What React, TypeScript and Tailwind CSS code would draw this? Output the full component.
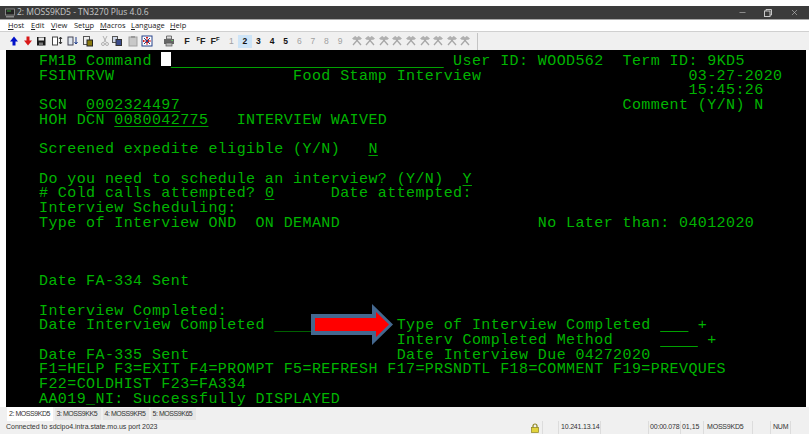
import type { ReactNode } from 'react';
import { Minus, X } from 'lucide-react';

function Row({ children }: { children?: ReactNode }) {
  return <div className="h-[14.7px]">{children}</div>;
}

// underlined 3270 input field
function Field({ children, dark }: { children: string; dark?: boolean }) {
  return (
    <span className={`underline underline-offset-[2px] ${dark ? 'decoration-[#006000]' : 'decoration-[#00a000]'}`}>
      {children}
    </span>
  );
}

function Hammers() {
  return (
    <svg width="12" height="12" viewBox="0 0 12 12" className="mx-auto">
      <path d="M3 2 L10 10 M9 2 L2 10" stroke="#a8a8a8" strokeWidth="1.3" />
      <path d="M1 3.5 L4.5 1 L6 2.5 L7.5 1 L11 3.5 L9 5 L6 4 L3 5 Z" fill="#b0b0b0" />
    </svg>
  );
}

function Sep() {
  return <div className="h-full w-px shrink-0 bg-[#dcdcdc]" />;
}

export default function App() {
  const nums = ['1', '2', '3', '4', '5', '6', '7', '8', '9'];

  return (
    <div className="relative h-[439px] w-[809px] overflow-hidden bg-white font-['Open_Sans',sans-serif]">
      <div className="h-[6px]" />

      {/* title bar */}
      <div className="flex h-[13px] items-center bg-[#3b3b3b] pl-[5px] pr-[10px] text-[8.5px] text-[#c8c8c8]">
        <svg width="10" height="10" viewBox="0 0 10 10">
          <rect x="0.5" y="1" width="9" height="6" fill="#222" stroke="#999" strokeWidth="0.8" />
          <rect x="2" y="2.5" width="4" height="1" fill="#3c9a3c" />
          <rect x="1" y="8" width="8" height="1.5" fill="#888" />
        </svg>
        <span className="ml-[2px] flex-1">2: MOSS9KD5 - TN3270 Plus 4.0.6</span>
        <Minus size={9} strokeWidth={1.5} className="mr-[17px]" />
        <svg width="8" height="8" viewBox="0 0 8 8" className="mr-[18px]" fill="none" stroke="#c8c8c8">
          <rect x="0.5" y="2" width="5.5" height="5.5" />
          <path d="M2 2V0.5H7.5V6H6" />
        </svg>
        <X size={9} strokeWidth={1.5} />
      </div>

      {/* menu */}
      <div className="flex h-[12px] items-center border-t border-[#a8a8a8] bg-white text-[7.5px] text-[#222]">
        <span className="ml-[8px] w-[23px]"><u>H</u>ost</span>
        <span className="w-[20px]"><u>E</u>dit</span>
        <span className="w-[23px]"><u>V</u>iew</span>
        <span className="w-[26px]">Set<u>u</u>p</span>
        <span className="w-[31px]"><u>M</u>acros</span>
        <span className="w-[39px]"><u>L</u>anguage</span>
        <span><u>H</u>elp</span>
      </div>

      {/* toolbar */}
      <div className="flex h-[19px] items-center border-t border-[#d0d0d0] bg-[#f0f0f0] pl-[7px]">
        <svg width="14" height="12" viewBox="0 0 14 12"><path d="M7 1.5 L11 6.5 H8.5 V10.5 H5.5 V6.5 H3 Z" fill="#0010c8" /></svg>
        <svg width="14" height="12" viewBox="0 0 14 12"><path d="M7 10.5 L11 5.5 H8.5 V1.5 H5.5 V5.5 H3 Z" fill="#d81818" /></svg>
        <svg width="12" height="12" viewBox="0 0 12 12">
          <rect x="2" y="2" width="8.5" height="8.5" fill="#1a1a1a" />
          <rect x="3.5" y="2.5" width="5.5" height="3" fill="#e8e8e8" />
          <rect x="4" y="7.5" width="4" height="3" fill="#777" />
        </svg>
        <svg width="12" height="12" viewBox="0 0 12 12" className="ml-[4px]">
          <rect x="1.5" y="2" width="5" height="8" fill="#fff" stroke="#444" />
          <path d="M9.5 2v7M8 4l1.5-2 1.5 2M8 7l1.5 2 1.5-2" stroke="#333" fill="none" />
        </svg>
        <svg width="12" height="12" viewBox="0 0 12 12" className="ml-[4px]">
          <rect x="1" y="2" width="5" height="8" fill="#dfe6ef" stroke="#445" />
          <path d="M9 2v7M7.5 7l1.5 2 1.5-2" stroke="#1a3a8a" fill="none" />
        </svg>
        <svg width="12" height="12" viewBox="0 0 12 12" className="ml-[3px]">
          <rect x="1.5" y="1.5" width="6" height="8" fill="#eee" stroke="#555" />
          <rect x="5" y="5" width="5.5" height="6" fill="#8a7a10" stroke="#222" />
        </svg>
        <svg width="12" height="12" viewBox="0 0 12 12" className="ml-[5px]" fill="none" stroke="#b0b0b0">
          <path d="M4 1l3 6M8 1L5 7" />
          <circle cx="4" cy="9" r="1.5" />
          <circle cx="8" cy="9" r="1.5" />
        </svg>
        <svg width="12" height="12" viewBox="0 0 12 12">
          <rect x="1.5" y="1.5" width="5" height="6" fill="#cfd6e6" stroke="#555" />
          <rect x="5" y="4.5" width="5.5" height="6" fill="#3a4a8a" stroke="#333" />
        </svg>
        <svg width="12" height="12" viewBox="0 0 12 12" className="ml-[4px]">
          <rect x="2" y="2" width="8" height="9" fill="#c8c8c8" stroke="#a0a0a0" />
          <rect x="4" y="1" width="4" height="2" fill="#999" />
        </svg>
        <svg width="12" height="12" viewBox="0 0 12 12" className="ml-[2px]">
          <rect x="1" y="1" width="10" height="10" fill="#fff" stroke="#24408a" />
          <path d="M6 2v8M2 6h8" stroke="#d02020" strokeWidth="2" strokeDasharray="1.5 1" />
          <path d="M3 3l6 6M9 3l-6 6" stroke="#24408a" strokeWidth="1" />
        </svg>
        <svg width="12" height="12" viewBox="0 0 12 12" className="ml-[10px]">
          <path d="M3.5 1h5v3h-5z" fill="#ddd" stroke="#555" strokeWidth="0.8" />
          <rect x="1" y="4" width="10" height="5" fill="#666" />
          <rect x="3" y="8" width="6" height="3" fill="#bbb" stroke="#555" strokeWidth="0.7" />
          <rect x="8.5" y="5" width="1.5" height="1" fill="#6c6" />
        </svg>
        <span className="ml-[6px] w-[12px] text-center font-['Liberation_Sans',sans-serif] text-[9px] font-bold leading-none text-[#222]">F</span>
        <span className="w-[16px] text-center font-['Liberation_Sans',sans-serif] text-[9px] font-bold leading-none text-[#222]"><sup className="top-[-1px] align-top text-[6px] leading-none">F</sup>F</span>
        <span className="w-[12px] text-center font-['Liberation_Sans',sans-serif] text-[9px] font-bold leading-none text-[#222]">F<sup className="top-[-1px] align-top text-[6px] leading-none">F</sup></span>
        <div className="ml-[3.5px] flex h-[13px] items-center font-['Liberation_Sans',sans-serif] text-[8.5px]">
          {nums.map((n, i) => (
            <span
              key={n}
              className={`flex h-[13px] w-[13.6px] items-center justify-center ${i === 1 ? 'bg-[#cde4f7] font-bold text-[#111]' : i > 0 && i < 5 ? 'font-bold text-[#111]' : 'text-[#a0a0a0]'}`}
            >
              {n}
            </span>
          ))}
        </div>
        <div className="ml-[3px] flex">
          {nums.map((n) => (
            <span key={n} className="w-[13.6px]"><Hammers /></span>
          ))}
        </div>
        <div className="ml-[5px] h-[17px] w-px bg-[#c4c4c4]" />
      </div>

      {/* terminal */}
      <div className="mx-[6px] h-[357px] w-[800px] bg-black pl-[33px] pt-[5px] font-['Liberation_Mono',monospace] text-[15px] leading-[14.7px] tracking-[0.41px] whitespace-pre text-[#00b400]">
        <Row>FM1B Command <span className="relative -top-[3px] inline-block h-[14px] w-[9.41px] bg-white align-top" /><Field>{'                             '}</Field>{' User ID: WOOD562  Term ID: 9KD5'}</Row>
        <Row>{'FSINTRVW                   Food Stamp Interview                      03-27-2020'}</Row>
        <Row>{'                                                                     15:45:26'}</Row>
        <Row>SCN  <Field>0002324497</Field>{'                                               Comment (Y/N) N'}</Row>
        <Row>HOH DCN <Field>0080042775</Field>   INTERVIEW WAIVED</Row>
        <Row />
        <Row>Screened expedite eligible (Y/N)   <Field>N</Field></Row>
        <Row />
        <Row>Do you need to schedule an interview? (Y/N)  <Field>Y</Field></Row>
        <Row># Cold calls attempted? <Field>0</Field>      Date attempted:</Row>
        <Row>Interview Scheduling:</Row>
        <Row>Type of Interview OND  ON DEMAND                     No Later than: 04012020</Row>
        <Row />
        <Row />
        <Row />
        <Row>Date FA-334 Sent</Row>
        <Row />
        <Row>Interview Completed:</Row>
        <Row>Date Interview Completed <Field dark>{'        '}</Field>{'     Type of Interview Completed '}<Field>{'   '}</Field> +</Row>
        <Row>{'                                      Interv Completed Method     '}<Field>{'    '}</Field> +</Row>
        <Row>Date FA-335 Sent                      Date Interview Due 04272020</Row>
        <Row>F1=HELP F3=EXIT F4=PROMPT F5=REFRESH F17=PRSNDTL F18=COMMENT F19=PREVQUES</Row>
        <Row>F22=COLDHIST F23=FA334</Row>
        <Row>AA019_NI: Successfully DISPLAYED</Row>
      </div>

      {/* red arrow drawn over the screen */}
      <svg width="83" height="41" viewBox="0 0 83 41" className="absolute left-[311px] top-[304px]">
        <path d="M0 10H61V0L82 20.5L61 41V31H0Z" fill="#44688f" />
        <path d="M4 14H65V8L78 20.5L65 33V27H4Z" fill="#ff0000" />
      </svg>

      {/* tabs */}
      <div className="flex h-[14px] items-center whitespace-nowrap bg-[#f0f0f0] pl-[7px] font-['Liberation_Sans',sans-serif] text-[7px] tracking-[-0.45px] text-[#333]">
        <span className="flex h-full w-[46px] items-center bg-white pl-[2px]">2: MOSS9KD5</span>
        <span className="ml-[1.5px] flex h-[12px] w-[46px] items-center bg-[#e6e6e6] pl-[2px]">3: MOSS9KK5</span>
        <span className="ml-[2px] flex h-[12px] w-[46px] items-center bg-[#e6e6e6] pl-[2px]">4: MOSS9KR5</span>
        <span className="ml-[2px] flex h-[12px] w-[45px] items-center bg-[#e6e6e6] pl-[2px]">5: MOSS9K65</span>
      </div>

      {/* status bar */}
      <div className="flex h-[13px] items-center whitespace-nowrap bg-[#f0f0f0] pl-[6px] font-['Liberation_Sans',sans-serif] text-[7px] tracking-[-0.03px] text-[#333]">
        <span className="w-[525px]">Connected to sdcipo4.intra.state.mo.us port 2023</span>
        <svg width="8" height="10" viewBox="0 0 8 10" className="mr-[3px]">
          <path d="M2 5V3a2 2 0 0 1 4 0v2" fill="none" stroke="#8c8420" strokeWidth="1.2" />
          <rect x="0.5" y="4.5" width="7" height="5" fill="#e2d33c" stroke="#8c8420" strokeWidth="0.7" />
        </svg>
        <Sep />
        <span className="w-[15px]" />
        <Sep />
        <span className="w-[41px] pl-[2px] tracking-[-0.2px]">10.241.13.14</span>
        <Sep />
        <span className="w-[47px]" />
        <Sep />
        <span className="w-[31px] pl-[1px] tracking-[-0.2px]">00:00.078</span>
        <Sep />
        <span className="w-[22px] pl-[1px]">01,15</span>
        <Sep />
        <span className="w-[48px] pl-[3px] tracking-[-0.2px]">MOSS9KD5</span>
        <Sep />
        <span className="w-[17px]" />
        <Sep />
        <span className="w-[19px] pl-[2px] tracking-[-0.2px]">NUM</span>
        <Sep />
      </div>
    </div>
  );
}
